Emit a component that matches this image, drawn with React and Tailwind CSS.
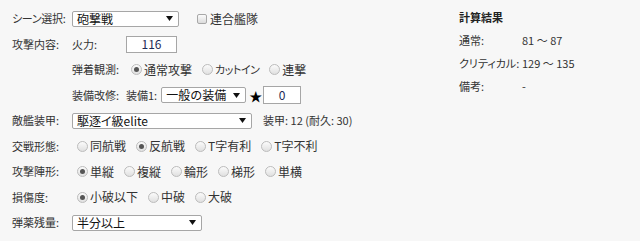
import React from "react";

const Radio = ({ label, checked, narrow }) => (
  <label className="flex items-center mx-[5px]">
    <span className="flex items-center justify-center w-[11px] h-[11px] rounded-full border border-[#bcbcbc] bg-gradient-to-b from-[#fbfbfb] to-[#e0e0e0]">
      {checked && <span className="w-[5px] h-[5px] rounded-full bg-[#555]" />}
    </span>
    <span
      className={`ml-[2px] ${narrow ? "text-[11px] [font-feature-settings:'palt'] tracking-[-0.5px]" : "text-[12px]"}`}
    >
      {label}
    </span>
  </label>
);

const Select = ({ value, className }) => (
  <div
    className={`flex items-center justify-between h-[16px] bg-white border border-[#a6a6a6] rounded-[2px] pl-[4px] pr-[5px] text-[12px] text-[#111] ${className}`}
  >
    <span className="leading-none">{value}</span>
    <svg width="7" height="5" viewBox="0 0 7 5">
      <path d="M0 0h7L3.5 5z" fill="#111" />
    </svg>
  </div>
);

const Input = ({ value, className }) => (
  <div
    className={`flex items-center justify-center bg-white border border-[#a6a6a6] text-[12px] text-[#1d2a55] ${className}`}
  >
    {value}
  </div>
);

const Row = ({ label, palt, children }) => (
  <div className="flex items-center h-[25.5px]">
    <div className={`w-[60px] shrink-0 ${palt ? "[font-feature-settings:'palt'] tracking-[-0.3px]" : ""}`}>{label}</div>
    {children}
  </div>
);

const SubRow = ({ label, children }) => (
  <div className="flex items-center h-[25.5px] pl-[60px]">
    <div className="w-[54px] shrink-0">{label}</div>
    {children}
  </div>
);

export default function App() {
  return (
    <div className="flex w-[640px] h-[241px] bg-[#f7f7f7] text-[11px] leading-none text-[#333] whitespace-nowrap font-['Noto_Sans_CJK_JP',sans-serif]">
      {/* 入力 */}
      <div className="w-[459px] shrink-0 pl-[12px] pt-[6px]">
        <Row label="シーン選択:" palt>
          <Select value="砲撃戦" className="w-[107px]" />
          <label className="flex items-center ml-[18px]">
            <span className="w-[10px] h-[10px] rounded-[2px] border border-[#a8a8a8] bg-gradient-to-b from-[#fbfbfb] to-[#dcdcdc]" />
            <span className="ml-[3px] text-[12px]">連合艦隊</span>
          </label>
        </Row>

        <Row label="攻撃内容:">
          <div className="w-[54px] shrink-0">火力:</div>
          <Input value="116" className="w-[51px] h-[17px]" />
        </Row>

        <SubRow label="弾着観測:">
          <Radio checked label="通常攻撃" />
          <Radio narrow label="カットイン" />
          <Radio label="連撃" />
        </SubRow>

        <SubRow label="装備改修:">
          <span>装備1:</span>
          <Select value="一般の装備" className="w-[85px] ml-[4px]" />
          <span className="ml-[3px] text-black text-[13px]">★</span>
          <Input value="0" className="w-[38px] h-[18px] ml-[1px]" />
        </SubRow>

        <Row label="敵艦装甲:">
          <Select value="駆逐イ級elite" className="w-[180px] [font-feature-settings:'palt']" />
          <span className="ml-[11px]">装甲: 12 (耐久: 30)</span>
        </Row>

        <Row label="交戦形態:">
          <Radio label="同航戦" />
          <Radio checked label="反航戦" />
          <Radio label="T字有利" />
          <Radio label="T字不利" />
        </Row>

        <Row label="攻撃陣形:">
          <Radio checked label="単縦" />
          <Radio label="複縦" />
          <Radio label="輪形" />
          <Radio label="梯形" />
          <Radio label="単横" />
        </Row>

        <Row label="損傷度:">
          <Radio checked label="小破以下" />
          <Radio label="中破" />
          <Radio label="大破" />
        </Row>

        <Row label="弾薬残量:">
          <Select value="半分以上" className="w-[130px]" />
        </Row>
      </div>

      {/* 計算結果 */}
      <div className="pt-[6px]">
        <div className="flex items-center h-[23px] font-bold text-[#222]">計算結果</div>
        <div className="flex items-center h-[23px]">
          <div className="w-[63px]">通常:</div>
          <div>81 〜 87</div>
        </div>
        <div className="flex items-center h-[23px]">
          <div className="w-[63px] [font-feature-settings:'palt']">クリティカル:</div>
          <div>129 〜 135</div>
        </div>
        <div className="flex items-center h-[23px]">
          <div className="w-[63px]">備考:</div>
          <div>-</div>
        </div>
      </div>
    </div>
  );
}
